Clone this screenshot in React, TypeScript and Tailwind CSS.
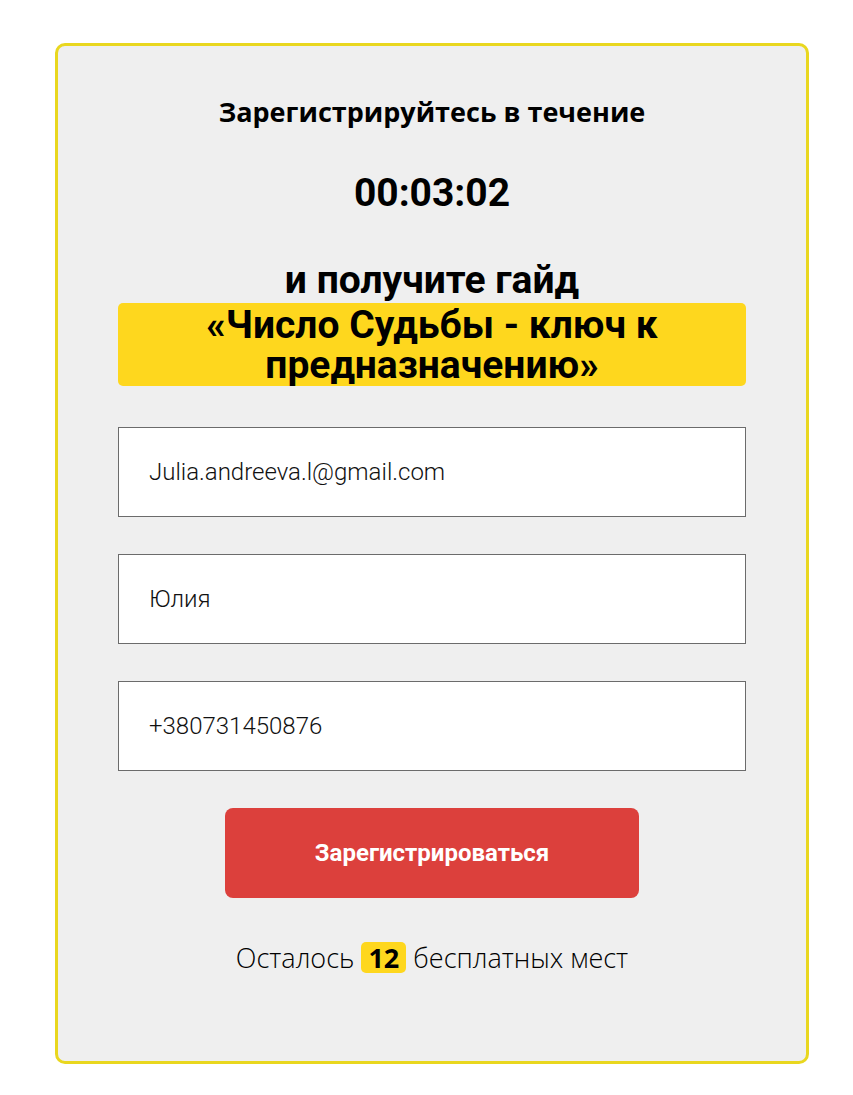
import React from 'react'

const fields = ['Julia.andreeva.l@gmail.com', 'Юлия', '+380731450876']

export default function App() {
    return (
        <div className="min-h-screen bg-white pt-[43px] pb-[31px] px-[55px]">
            <div className="w-[754px] h-[1021px] rounded-[10px] border-[3px] border-[#e9d71f] bg-[#efefef] px-[60px] pt-[48px] flex flex-col items-center">
                <h2 className="font-['Open_Sans',sans-serif] font-bold text-[27px] leading-[36px] text-black text-center">
                    Зарегистрируйтесь в течение
                </h2>
                <div className="mt-[39px] font-['Roboto',sans-serif] font-bold text-[39px] leading-[48px] text-black">
                    00:03:02
                </div>
                <div className="mt-[41px] font-['Roboto',sans-serif] font-bold text-[39px] leading-[44px] text-black text-center">
                    и получите гайд
                </div>
                <div className="mt-[1px] w-full rounded-[5px] bg-[#fed71e] pt-[2px] pb-[1px] font-['Roboto',sans-serif] font-bold text-[39px] leading-[40px] text-black text-center">
                    <div>«Число Судьбы - ключ к</div>
                    <div>предназначению»</div>
                </div>
                <form className="mt-[41px] w-full flex flex-col gap-[37px]">
                    {fields.map((value, i) => (
                        <input
                            key={i}
                            readOnly
                            value={value}
                            className="w-full h-[90px] border border-[#6b6b6b] bg-white px-[30px] font-['Roboto',sans-serif] font-light text-[24px] text-[#111] outline-none"
                        />
                    ))}
                </form>
                <button className="mt-[37px] w-[414px] h-[90px] rounded-[8px] bg-[#dc403c] font-['Roboto',sans-serif] font-bold text-[24px] text-white">
                    Зарегистрироваться
                </button>
                <p className="mt-[42px] font-['Open_Sans',sans-serif] font-light text-[27px] leading-[36px] text-black">
                    Осталось <span className="inline-block rounded-[5px] bg-[#fed71e] px-[7px] leading-[31px] font-bold">12</span> бесплатных мест
                </p>
            </div>
        </div>
    )
}
